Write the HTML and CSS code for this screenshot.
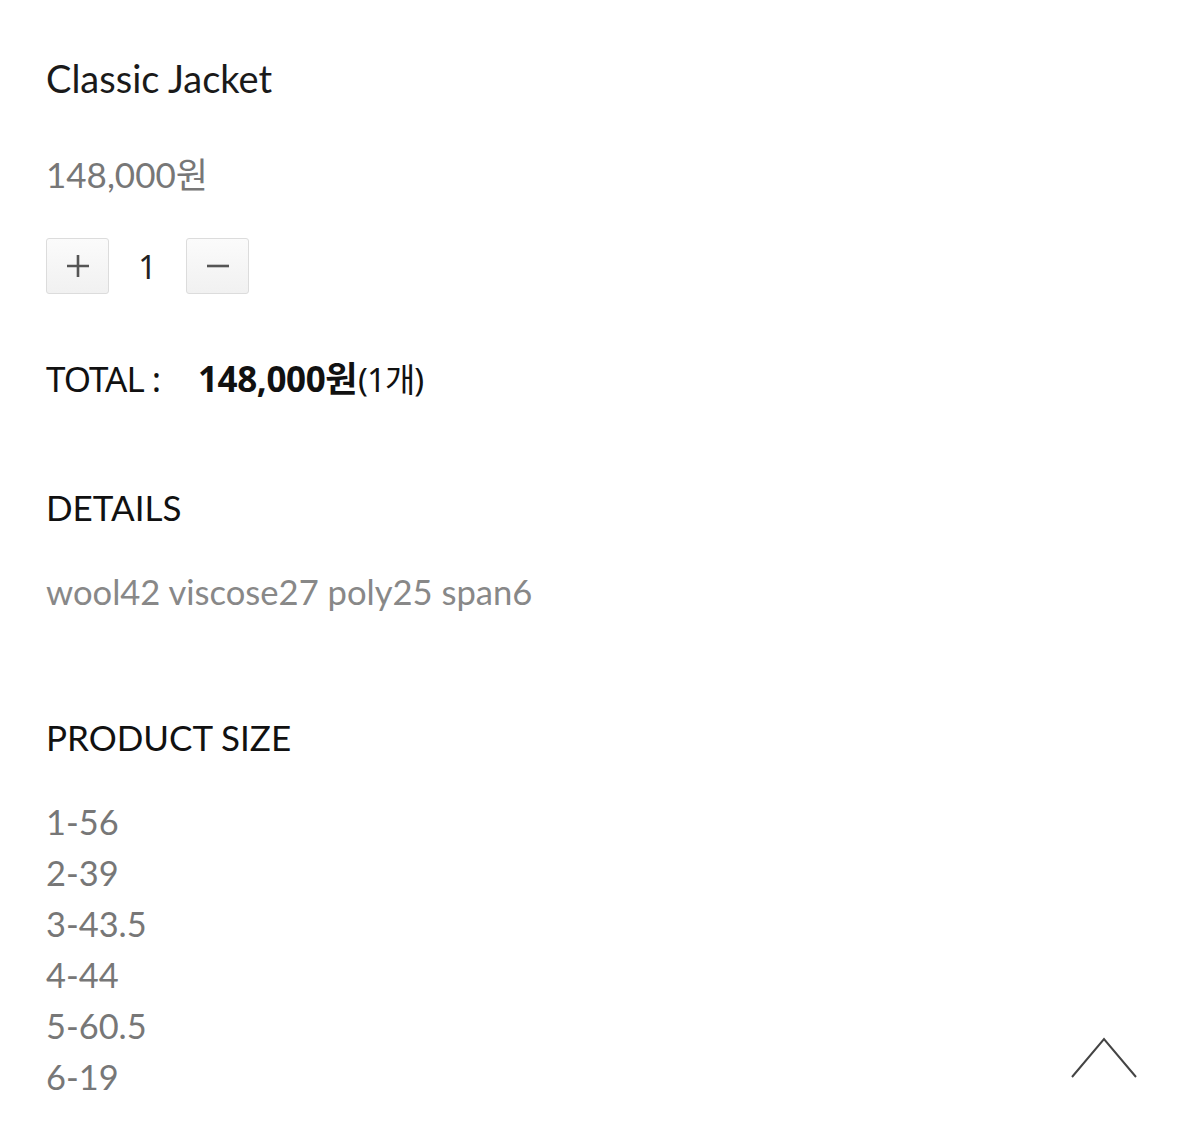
FILE: index.html
```html
<!DOCTYPE html>
<html lang="ko">
<head>
<meta charset="utf-8">
<title>Classic Jacket</title>
<link rel="stylesheet" href="styles.css">
</head>
<body>
<main class="product">
  <h1 class="title">Classic Jacket</h1>
  <p class="price">148,000원</p>
  <div class="qty">
    <button class="qty-btn" aria-label="plus">
      <svg width="28" height="28" viewBox="0 0 28 28"><path d="M14 3v22M3 14h22" stroke="#555" stroke-width="2.6" fill="none"/></svg>
    </button>
    <span class="qty-val">1</span>
    <button class="qty-btn" aria-label="minus">
      <svg width="28" height="28" viewBox="0 0 28 28"><path d="M3 14h22" stroke="#555" stroke-width="2.6" fill="none"/></svg>
    </button>
  </div>
  <p class="total"><span class="total-label">TOTAL :</span><strong class="total-sum">148,000원</strong><span class="total-count">(1개)</span></p>
  <h2 class="section-head details-head">DETAILS</h2>
  <p class="details-text">wool42 viscose27 poly25 span6</p>
  <h2 class="section-head size-head">PRODUCT SIZE</h2>
  <ul class="sizes">
    <li>1-56</li>
    <li>2-39</li>
    <li>3-43.5</li>
    <li>4-44</li>
    <li>5-60.5</li>
    <li>6-19</li>
  </ul>
</main>
<a class="top-btn" href="#" aria-label="top">
  <svg width="68" height="44" viewBox="0 0 68 44"><polyline points="2,41 34,3 66,41" fill="none" stroke="#444" stroke-width="2"/></svg>
</a>
</body>
</html>
```
FILE: styles.css
```css
* { box-sizing: border-box; }
html, body { margin: 0; padding: 0; background: #fff; }
body {
  font-family: Lato, "Noto Sans CJK KR", sans-serif;
  font-size: 35px;
  line-height: 43px;
  color: #111;
  position: relative;
  min-height: 1125px;
}
.product { padding: 57px 0 0 46px; }
.title { margin: 0; font-size: 38px; font-weight: 400; line-height: 43px; color: #1a1a1a; }
.price { margin: 53px 0 0; color: #777; }
.qty { display: flex; align-items: center; margin-top: 42px; height: 56px; }
.qty-btn {
  width: 63px; height: 56px; padding: 0; margin: 0;
  border: 1.5px solid #dcdcdc; border-radius: 3px;
  background: linear-gradient(#fbfbfb, #f1f1f1);
  display: flex; align-items: center; justify-content: center;
}
.qty-val { width: 77px; text-align: center; font-size: 32px; color: #222; font-family: "Noto Sans", "Noto Sans CJK KR", sans-serif; }
.total {
  margin: 63px 0 0; font-family: "Noto Sans", "Noto Sans CJK KR", sans-serif; font-size: 35px; color: #111;
  display: flex; align-items: baseline;
}
.total-label { letter-spacing: -1px; width: 152px; }
.total-sum { font-weight: 700; letter-spacing: -0.4px; }
.total-count { font-size: 33px; letter-spacing: -1px; margin-left: 1px; }
.section-head { margin: 0; font-size: 35px; font-weight: 400; line-height: 43px; color: #111; }
.details-head { margin-top: 85px; }
.details-text { margin: 41px 0 0; color: #888; font-size: 34.6px; }
.size-head { margin-top: 103px; }
.sizes { list-style: none; margin: 37px 0 0; padding: 0; color: #777; font-size: 34.4px; }
.sizes li { line-height: 51px; }
.top-btn { position: absolute; left: 1070px; top: 1036px; display: block; }
```
